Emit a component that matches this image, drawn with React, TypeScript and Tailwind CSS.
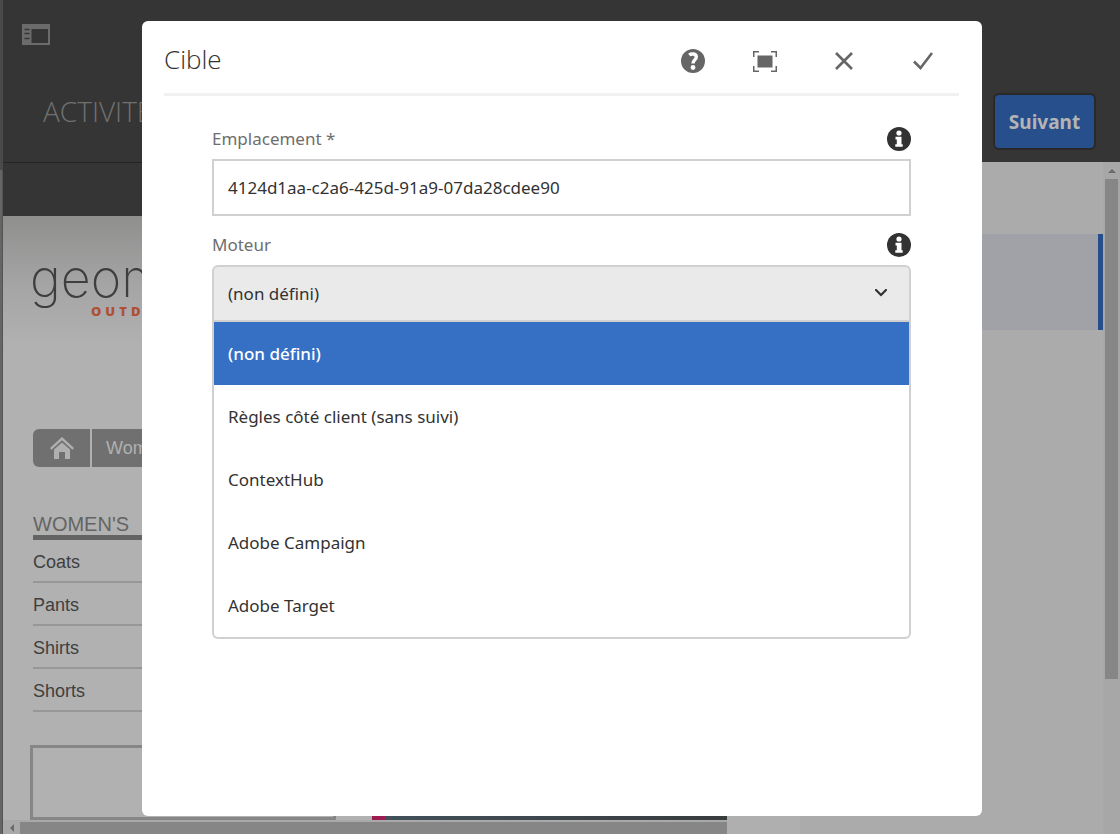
import React, { useState } from "react";

const ENGINES = [
  "(non défini)",
  "Règles côté client (sans suivi)",
  "ContextHub",
  "Adobe Campaign",
  "Adobe Target",
];

const CATEGORIES = ["Coats", "Pants", "Shirts", "Shorts"];

function RailIcon() {
  return (
    <svg width="28" height="21" viewBox="0 0 28 21" aria-hidden="true">
      <path fill="#6b6b6b" fillRule="evenodd" d="M0 0h28v21H0zM9.500 5v14H26V5z" />
      <path stroke="#353535" strokeWidth="1.300" d="M2.500 5.500h5M2.500 9.500h5M2.500 14.500h5" />
    </svg>
  );
}

function HelpIcon() {
  return (
    <svg width="24" height="24" viewBox="0 0 24 24" aria-hidden="true">
      <circle cx="12" cy="12" r="12" fill="#666" />
      <path
        d="M8.200 6C10 4.600 15.300 4.200 15.300 8c0 2.900-3.300 3-3.300 6.500"
        fill="none"
        stroke="#fff"
        strokeWidth="3.400"
      />
      <circle cx="12" cy="18.500" r="2.400" fill="#fff" />
    </svg>
  );
}

function FullScreenIcon() {
  return (
    <svg width="24" height="21" viewBox="0 0 24 21" aria-hidden="true">
      <rect x="4.500" y="4.500" width="15" height="12" fill="#666" />
      <path
        d="M.75 6V.75H6M18 .75h5.250V6M23.250 15v5.250H18M6 20.250H.75V15"
        fill="none"
        stroke="#666"
        strokeWidth="1.500"
      />
    </svg>
  );
}

function CloseIcon() {
  return (
    <svg width="18" height="18" viewBox="0 0 18 18" aria-hidden="true">
      <path d="M1 1l16 16M17 1L1 17" stroke="#666" strokeWidth="2.600" />
    </svg>
  );
}

function CheckIcon() {
  return (
    <svg width="20" height="18" viewBox="0 0 20 18" aria-hidden="true">
      <path d="M1 9.500l6.500 6.500L19 1" fill="none" stroke="#666" strokeWidth="2.600" />
    </svg>
  );
}

function InfoIcon() {
  return (
    <svg width="24" height="24" viewBox="0 0 24 24" aria-hidden="true">
      <circle cx="12" cy="12" r="12" fill="#323232" />
      <circle cx="12" cy="6" r="2.600" fill="#fff" />
      <path d="M8.500 9.800h6v7.400h1.200v2.600H8.300v-2.600h1.500v-4.800H8.500z" fill="#fff" />
    </svg>
  );
}

function HomeIcon() {
  return (
    <svg width="24" height="22" viewBox="0 0 24 22" aria-hidden="true">
      <path d="M12 0l12 11-1.500 1.700L12 3.200 1.500 12.700 0 11z" fill="#b0b0b0" />
      <path d="M4 12.500l8-7 8 7V22h-5v-7H9v7H4z" fill="#b0b0b0" />
    </svg>
  );
}

function SitePreview() {
  return (
    <div className="flex h-full flex-col bg-[#b1b1b1]">
      <div className="h-[53px] shrink-0 bg-[#353535]" />
      <div className="flex flex-1 flex-col bg-[linear-gradient(#8f8f8e,#a5a5a5_70px,#b1b1b1_130px)] pl-[30px]">
        <div className="-ml-[3px] h-[106px] w-28 overflow-hidden pt-[38px] font-['Inter',sans-serif]">
          <div className="text-[52px] leading-[50px] font-extralight text-[#3c3e40]">geometrixx</div>
          <div className="pl-[61px] font-['Open_Sans',sans-serif] text-[13px] leading-[14px] font-extrabold tracking-[4px] text-[#ad5135]">
            OUTDOORS
          </div>
        </div>
        <nav className="mt-[107px] flex h-[38px] shrink-0 gap-[2px] overflow-hidden rounded-l-md font-['Liberation_Sans',Arial,sans-serif] text-[18px] text-[#b1b1b1]">
          <a href="#home" aria-label="Home" className="flex w-[57px] items-center justify-center bg-[#707070]">
            <HomeIcon />
          </a>
          <a href="#women" className="flex flex-1 items-center bg-[#707070] px-[14px]">
            Women
          </a>
        </nav>
        <div className="mt-[46px] w-[300px] font-['Liberation_Sans',Arial,sans-serif]">
          <h2 className="border-b-[5px] border-[#646464] text-[20px] leading-[22px] text-[#646464]">WOMEN'S</h2>
          <ul className="text-[18px] text-[#3f3f3f]">
            {CATEGORIES.map((name) => (
              <li key={name} className="h-[43px] border-b-2 border-[#979797] pt-[9px] leading-[26px]">
                <a href={"#" + name.toLowerCase()}>{name}</a>
              </li>
            ))}
          </ul>
        </div>
        <div className="mt-[33px] -ml-[3px] flex h-[75px] items-end">
          <div className="h-full w-[306px] border-[3px] border-[#868686]" />
          <div className="ml-9 h-8 w-[13px] bg-[#9c1b50]" />
          <div className="h-8 flex-1 bg-linear-to-r from-[#42505a] to-[#383c3d]" />
        </div>
      </div>
      <div className="flex h-[14px] shrink-0 bg-[#a9a9a9] pt-[2px]">
        <div className="flex w-[17px] items-center justify-center">
          <svg width="4" height="8" viewBox="0 0 4 8" aria-hidden="true">
            <path d="M4 0v8L0 4z" fill="#6a6a6a" />
          </svg>
        </div>
        <div className="flex-1 bg-[#868686]" />
      </div>
    </div>
  );
}

function AppPage() {
  return (
    <div className="flex h-screen overflow-hidden bg-[#353535]">
      <div className="flex w-[3px] shrink-0 flex-col">
        <div className="h-[170px] bg-[#4a4a4a]" />
        <div className="flex-1 border-r border-[#545454] bg-[#656565]" />
      </div>
      <div className="flex min-w-0 flex-1 flex-col">
        <header className="flex h-[162px] shrink-0 flex-col pt-6">
          <button type="button" aria-label="Rail" className="ml-[19px] w-7">
            <RailIcon />
          </button>
          <div className="flex flex-1 justify-between pr-6 pl-10">
            <h1 className="mt-12 font-['Open_Sans',sans-serif] text-[28px] leading-9 font-light text-[#707070]">
              ACTIVITÉS
            </h1>
            <button
              type="button"
              className="mt-12 h-[57px] w-[103px] rounded-md border-2 border-[#292929] bg-[#264f8b] pt-[2px] font-['Noto_Sans',sans-serif] text-[19px] font-bold text-[#b4b4b4]"
            >
              Suivant
            </button>
          </div>
        </header>
        <div className="flex min-h-0 flex-1">
          <div className="w-[724px] shrink-0 border-t border-[#242424]">
            <SitePreview />
          </div>
          <div className="w-[73px] shrink-0 bg-[#afafaf]" />
          <div className="flex-1 bg-[#ababab] pt-[72px]">
            <div className="h-24 border-r-[5px] border-[#254e8a] bg-[#a1a2a7]" />
          </div>
          <div className="flex w-[17px] shrink-0 flex-col items-center bg-[#a7a7a7]">
            <div className="flex h-[17px] items-center">
              <svg width="8" height="4" viewBox="0 0 8 4" aria-hidden="true">
                <path d="M0 4h8L4 0z" fill="#6a6a6a" />
              </svg>
            </div>
            <div className="h-[500px] w-[13px] bg-[#868686]" />
          </div>
        </div>
      </div>
    </div>
  );
}

function TargetDialog() {
  const [location, setLocation] = useState("4124d1aa-c2a6-425d-91a9-07da28cdee90");
  const [engine, setEngine] = useState(ENGINES[0]);
  const [open, setOpen] = useState(true);

  return (
    <div className="fixed inset-0 flex items-start justify-center pt-[21px] pb-[18px] pl-1">
      <section
        role="dialog"
        aria-labelledby="dialog-title"
        className="h-full w-full max-w-[840px] rounded-md bg-white pr-[23px] pl-[22px] font-['Noto_Sans',sans-serif] text-[17px] text-[#323232]"
      >
        <header className="flex h-[75px] items-start justify-between border-b-[3px] border-[#f1f1f1] pt-5 pr-[26px]">
          <h2 id="dialog-title" className="font-['Open_Sans',sans-serif] text-[26px] leading-9 font-light">
            Cible
          </h2>
          <div className="flex h-10 items-center">
            <button type="button" aria-label="Aide" className="mr-12">
              <HelpIcon />
            </button>
            <button type="button" aria-label="Plein écran" className="mr-[58px]">
              <FullScreenIcon />
            </button>
            <button type="button" aria-label="Annuler" className="mr-[60px]">
              <CloseIcon />
            </button>
            <button type="button" aria-label="Terminé">
              <CheckIcon />
            </button>
          </div>
        </header>

        <form className="px-12 pt-[27px]" onSubmit={(e) => e.preventDefault()}>
          <div className="flex h-9 items-center justify-between pb-1">
            <label htmlFor="location" className="text-[#6e6e6e]">
              Emplacement *
            </label>
            <InfoIcon />
          </div>
          <input
            id="location"
            type="text"
            value={location}
            onChange={(e) => setLocation(e.target.value)}
            className="h-[57px] w-full border-2 border-[#d0d0d0] px-[14px] outline-none"
          />
          <div className="mt-[13px] flex h-9 items-center justify-between pb-1">
            <label htmlFor="engine" className="text-[#6e6e6e]">
              Moteur
            </label>
            <InfoIcon />
          </div>
          <div className="relative">
            <select
              id="engine"
              value={engine}
              onChange={(e) => setEngine(e.target.value)}
              onMouseDown={(e) => {
                e.preventDefault();
                setOpen(!open);
              }}
              className="block h-[57px] w-full appearance-none rounded-t-md border-2 border-[#d0d0d0] bg-[#eaeaea] px-[14px] outline-none"
            >
              {ENGINES.map((name) => (
                <option key={name}>{name}</option>
              ))}
            </select>
            <svg
              className="pointer-events-none absolute top-6 right-6"
              width="12"
              height="8"
              viewBox="0 0 12 8"
              aria-hidden="true"
            >
              <path d="M1 1l5 5 5-5" fill="none" stroke="#323232" strokeWidth="2.200" strokeLinecap="round" />
            </svg>
          </div>
          {open && (
            <ul role="listbox" aria-label="Moteur" className="rounded-b-md border-2 border-t-0 border-[#d0d0d0]">
              {ENGINES.map((name) => (
                <li
                  key={name}
                  role="option"
                  aria-selected={name === engine}
                  onClick={() => setEngine(name)}
                  className="flex h-[63px] cursor-pointer items-center px-[14px] aria-selected:bg-[#3570c5] aria-selected:font-medium aria-selected:text-white"
                >
                  {name}
                </li>
              ))}
            </ul>
          )}
        </form>
      </section>
    </div>
  );
}

export default function App() {
  return (
    <>
      <AppPage />
      <TargetDialog />
    </>
  );
}
